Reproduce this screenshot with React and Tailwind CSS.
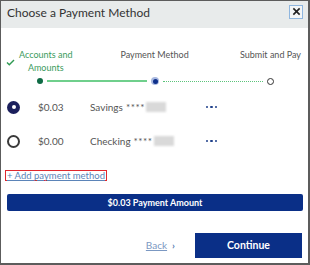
import React from "react";

const FONT = { fontFamily: "Lato, 'Open Sans', sans-serif" };

function Radio({ checked }) {
  if (checked) {
    return (
      <span className="w-[13px] h-[13px] rounded-full bg-[#1b1f5c] flex items-center justify-center">
        <span className="w-[4px] h-[4px] rounded-full bg-white" />
      </span>
    );
  }
  return <span className="w-[13px] h-[13px] rounded-full border-2 border-[#3a3a3a]" />;
}

function Dots() {
  return (
    <span className="flex gap-[2px]">
      <span className="w-[2.5px] h-[2.5px] rounded-full bg-[#1e3f8a]" />
      <span className="w-[2.5px] h-[2.5px] rounded-full bg-[#1e3f8a]" />
      <span className="w-[2.5px] h-[2.5px] rounded-full bg-[#1e3f8a]" />
    </span>
  );
}

function AccountRow({ checked, amount, label }) {
  return (
    <div className="h-[34px] flex items-center pl-[6px]">
      <Radio checked={checked} />
      <span className="ml-[18px] w-[52px] text-[10px] text-[#555]">{amount}</span>
      <span className="text-[10px] text-[#555] flex items-center">
        {label} <span className="ml-[3px] tracking-[0.5px]">****</span>
        <span className="ml-[1px] h-[10px] w-[20px] bg-[#d9d9d9] blur-[1px]" />
      </span>
      <span className="ml-auto mr-[91px]">
        <Dots />
      </span>
    </div>
  );
}

export default function App() {
  return (
    <div
      style={FONT}
      className="w-[310px] h-[265px] overflow-hidden bg-white border-t border-l border-r-2 border-b-2 border-[#5c5c5c]"
    >
      <div className="h-[27px] bg-[#e8ebeb] flex items-center justify-between pl-[6px] pr-[5px]">
        <span className="text-[12px] text-[#333] leading-none -mt-[4px]">
          Choose a Payment Method
        </span>
        <button className="w-[14px] h-[14px] border border-[#8fb6df] bg-[#f4f6f7] flex items-center justify-center -mt-[6px]">
          <svg width="9" height="9" viewBox="0 0 10 10">
            <path d="M1.5 1.5 L8.5 8.5 M8.5 1.5 L1.5 8.5" stroke="#222" strokeWidth="1.8" />
          </svg>
        </button>
      </div>

      <div className="mt-[20px] flex items-start text-[9px] leading-[13px]">
        <div className="ml-[5px] flex items-start">
          <svg width="9" height="7" viewBox="0 0 9 7" className="mt-[11px]">
            <path d="M1 3.5 L3.3 5.8 L8 1" stroke="#2e9a52" strokeWidth="1.4" fill="none" />
          </svg>
          <div className="ml-[4px] text-center text-[#3b9b5d]">
            Accounts and
            <br />
            Amounts
          </div>
        </div>
        <div className="ml-[48px] text-[#555]">Payment Method</div>
        <div className="ml-auto mr-[7px] text-[#555]">Submit and Pay</div>
      </div>

      <div className="mt-[3px] ml-[36px] w-[237px] h-[8px] flex items-center">
        <span className="w-[6px] h-[6px] rounded-full bg-[#0f6b45]" />
        <span className="flex-1 mx-[4px] h-[1.5px] bg-[#6fcf8c]" />
        <span className="w-[8px] h-[8px] rounded-full bg-[#a9b9e0] flex items-center justify-center">
          <span className="w-[5px] h-[5px] rounded-full bg-[#0e2f8a]" />
        </span>
        <span className="flex-1 mx-[4px] border-t border-dotted border-[#5cc47c]" />
        <span className="w-[7px] h-[7px] rounded-full border border-[#333]" />
      </div>

      <div className="mt-[5px]">
        <AccountRow checked amount="$0.03" label="Savings" />
        <AccountRow amount="$0.00" label="Checking" />
      </div>

      <div className="mt-[12px] ml-[4px] h-[11px] flex items-start">
        <a className="h-[11px] border border-[#e0282e] px-[1px] text-[9.5px] leading-[9px] text-[#5b84b8] underline">
          + Add payment method
        </a>
      </div>

      <div className="mt-[13px] ml-[6px] mr-[5px] h-[17px] rounded-[2px] bg-[#0a2f87] text-white text-[9px] font-bold flex items-center justify-center">
        $0.03 Payment Amount
      </div>

      <div className="mt-[22px] flex items-center justify-end pr-[6px]">
        <a className="text-[10px] text-[#7b98c2] underline">Back</a>
        <span className="ml-[5px] text-[10px] text-[#5b7fb3] font-bold">›</span>
        <button className="ml-[20px] w-[107px] h-[25px] bg-[#0a2f87] text-white text-[10.5px] font-bold">
          Continue
        </button>
      </div>
    </div>
  );
}
